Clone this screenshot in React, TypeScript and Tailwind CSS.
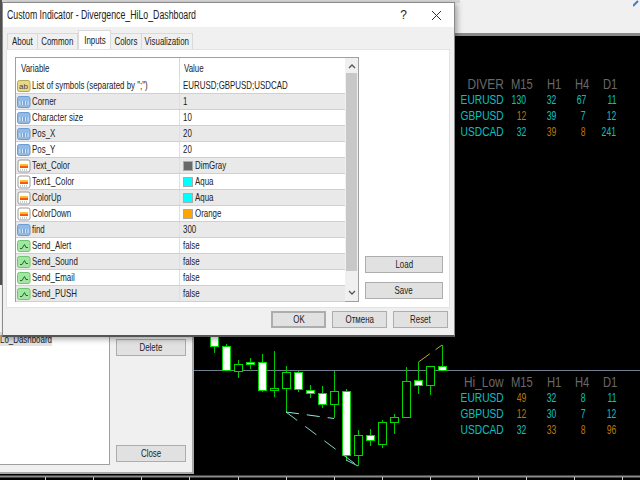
import type { ReactNode } from 'react';

const font = "[font-family:'Liberation_Sans',Arial,sans-serif]";

type Kind = 'ab' | 'num' | 'color' | 'bool';

const rows: { name: string; value: string; kind: Kind; swatch?: string }[] = [
  { name: 'List of symbols (separated by ";")', value: 'EURUSD;GBPUSD;USDCAD', kind: 'ab' },
  { name: 'Corner', value: '1', kind: 'num' },
  { name: 'Character size', value: '10', kind: 'num' },
  { name: 'Pos_X', value: '20', kind: 'num' },
  { name: 'Pos_Y', value: '20', kind: 'num' },
  { name: 'Text_Color', value: 'DimGray', kind: 'color', swatch: '#696969' },
  { name: 'Text1_Color', value: 'Aqua', kind: 'color', swatch: '#00ffff' },
  { name: 'ColorUp', value: 'Aqua', kind: 'color', swatch: '#00ffff' },
  { name: 'ColorDown', value: 'Orange', kind: 'color', swatch: '#ffa500' },
  { name: 'find', value: '300', kind: 'num' },
  { name: 'Send_Alert', value: 'false', kind: 'bool' },
  { name: 'Send_Sound', value: 'false', kind: 'bool' },
  { name: 'Send_Email', value: 'false', kind: 'bool' },
  { name: 'Send_PUSH', value: 'false', kind: 'bool' },
];

// the screenshot is squeezed sideways, so the text is too
function Sq({ children, className = 'origin-left' }: { children: ReactNode; className?: string }) {
  return <span className={`inline-block scale-x-[0.72] whitespace-nowrap ${className}`}>{children}</span>;
}

function RowIcon({ kind }: { kind: Kind }) {
  if (kind === 'ab') {
    return (
      <svg width="14" height="14" viewBox="0 0 14 14" className="shrink-0">
        <rect x="0.5" y="1.5" width="12.5" height="11" rx="2" fill="#e8d98a" stroke="#b5a65a" />
        <text x="2" y="10" fontSize="8" fill="#444" fontFamily="Liberation Sans">ab</text>
      </svg>
    );
  }
  if (kind === 'num') {
    return (
      <svg width="14" height="14" viewBox="0 0 14 14" className="shrink-0">
        <rect x="0.5" y="1.5" width="12.5" height="11" rx="2" fill="#8fbbe8" stroke="#6d9ccf" />
        <rect x="2.5" y="6" width="9" height="4" fill="#dceafa" />
        <path d="M3.5 7h1.5M6 7h2M9 7h1.5M3.5 9h1.5M6 9h2M9 9h1.5" stroke="#2f5f95" strokeWidth="1" />
      </svg>
    );
  }
  if (kind === 'color') {
    return (
      <svg width="14" height="14" viewBox="0 0 14 14" className="shrink-0">
        <rect x="1" y="1" width="12" height="12" rx="2" fill="#fff" stroke="#9a9a9a" />
        <rect x="3" y="5" width="8" height="2" fill="#f6c22c" />
        <rect x="3" y="7" width="8" height="2" fill="#ee5a1a" />
        <path d="M3 11h8" stroke="#999" strokeDasharray="1 1" />
      </svg>
    );
  }
  return (
    <svg width="14" height="14" viewBox="0 0 14 14" className="shrink-0">
      <rect x="0.5" y="1.5" width="12.5" height="11" rx="2" fill="#a3e6a3" stroke="#6cc76c" />
      <path d="M3 9.5h2l2.5-4 1.5 3h2" stroke="#1c6b2a" fill="none" />
    </svg>
  );
}

function Btn({ label, className }: { label: string; className: string }) {
  return (
    <div className={`flex h-[17px] items-center justify-center border border-[#adadad] bg-[#e1e1e1] text-[11px] text-[#222] ${className}`}>
      <Sq className="origin-center">{label}</Sq>
    </div>
  );
}

function Tab({ label, className }: { label: string; className: string }) {
  return (
    <div className={`flex items-center justify-center border border-b-0 border-[#d9d9d9] ${className}`}>
      <Sq className="origin-center">{label}</Sq>
    </div>
  );
}

function ParamTable() {
  return (
    <div className="relative flex h-[245px] w-[344px] flex-col border border-[#a0a0a0] bg-white">
      <div className="flex h-[20px] w-[329px] items-center">
        <div className="w-[164px] border-r border-[#d8d8d8] pl-[5px] leading-[20px]"><Sq>Variable</Sq></div>
        <div className="pl-[4px]"><Sq>Value</Sq></div>
      </div>
      {rows.map((r, i) => (
        <div key={r.name} className={`flex h-[16px] w-[329px] border-b border-[#d0d0d0] ${i % 2 ? 'bg-[#e9e9e9]' : 'bg-white'}`}>
          <div className="flex w-[164px] items-center gap-[1px] border-r border-[#e0e0e0] pl-[1px]">
            <RowIcon kind={r.kind} />
            <Sq>{r.name}</Sq>
          </div>
          <div className="flex items-center gap-[2px] pl-[3px]">
            {r.swatch && <span className="h-[10px] w-[10px] border border-[#aaa]" style={{ backgroundColor: r.swatch }} />}
            <Sq>{r.value}</Sq>
          </div>
        </div>
      ))}
      <div className="absolute top-0 right-0 bottom-0 flex w-[13px] flex-col bg-[#f0f0f0]">
        <div className="flex h-[15px] items-center justify-center">
          <svg width="8" height="6" viewBox="0 0 8 6"><path d="M1 5l3-3 3 3" stroke="#555" strokeWidth="1.3" fill="none" /></svg>
        </div>
        <div className="mx-px h-[198px] bg-[#c8c8c8]" />
        <div className="mt-auto flex h-[17px] items-center justify-center">
          <svg width="8" height="6" viewBox="0 0 8 6"><path d="M1 1l3 3 3-3" stroke="#555" strokeWidth="1.3" fill="none" /></svg>
        </div>
      </div>
    </div>
  );
}

function Dialog() {
  return (
    <div className={`absolute top-[2px] left-[2px] flex h-[335px] w-[453px] flex-col border border-[#8a8a8a] border-b-2 border-b-[#555] bg-[#f0f0f0] text-[11px] text-[#222] shadow-[2px_2px_6px_rgba(0,0,0,0.35)] ${font}`}>
      <div className="flex h-[24px] shrink-0 items-center bg-white pl-[4px] text-[12px]">
        <span className="inline-block origin-left scale-x-[0.73] whitespace-nowrap">Custom Indicator - Divergence_HiLo_Dashboard</span>
        <span className="ml-auto text-[12px]">?</span>
        <svg width="11" height="11" viewBox="0 0 11 11" className="mr-[12px] ml-[24px]"><path d="M1 1l9 9M10 1l-9 9" stroke="#333" strokeWidth="1" /></svg>
      </div>
      <div className="relative z-10 flex h-[22px] items-end pl-[4px]">
        <Tab label="About" className="h-[16px] w-[31px] bg-[#f0f0f0]" />
        <Tab label="Common" className="h-[16px] w-[40px] border-l-0 bg-[#f0f0f0]" />
        <Tab label="Inputs" className="h-[19px] w-[33px] bg-white" />
        <Tab label="Colors" className="h-[16px] w-[31px] border-l-0 bg-[#f0f0f0]" />
        <Tab label="Visualization" className="h-[16px] w-[51px] border-l-0 bg-[#f0f0f0]" />
      </div>
      <div className="mx-[3px] flex h-[259px] w-[444px] gap-[6px] border border-[#e3e3e3] bg-white pt-[7px] pl-[8px]">
        <ParamTable />
        <div className="flex flex-col gap-[9px] pt-[199px]">
          <Btn label="Load" className="w-[78px]" />
          <Btn label="Save" className="w-[78px]" />
        </div>
      </div>
      <div className="flex justify-end gap-[6px] pt-[3px] pr-[6px]">
        <Btn label="OK" className="w-[55px] border-2 border-[#0078d7]" />
        <Btn label="Отмена" className="w-[55px]" />
        <Btn label="Reset" className="w-[55px]" />
      </div>
    </div>
  );
}

function BackWindow() {
  return (
    <div className={`absolute top-[285px] left-0 flex h-[189px] w-[194px] border-r-2 border-b-2 border-[#a8a8a8] bg-[#f0f0f0] text-[11px] text-[#222] ${font}`}>
      <div className="relative h-[180px] w-[111px] border-r border-b border-[#a0a0a0] bg-white">
        <div className="absolute top-[47px] left-0 w-[52px] bg-[#e4e4e4] leading-[14px]"><Sq>Lo_Dashboard</Sq></div>
      </div>
      <div className="flex flex-1 flex-col justify-between pt-[54px] pr-[6px] pb-[10px] pl-[6px]">
        <Btn label="Delete" className="w-[70px]" />
        <Btn label="Close" className="w-[70px]" />
      </div>
    </div>
  );
}

// candle data as read off the picture: x, wick top, wick bottom, body top, body bottom, filled
const candles: [number, number, number, number, number, boolean][] = [
  [214, 330, 353, 330, 346, true],
  [226, 344, 371, 346, 370, true],
  [238, 360, 378, 364, 371, false],
  [250, 358, 369, 362, 364, true],
  [262, 354, 392, 362, 390, true],
  [274, 351, 397, 388, 390, false],
  [286, 366, 412, 372, 388, false],
  [298, 371, 392, 372, 389, true],
  [310, 385, 398, 390, 393, true],
  [322, 386, 408, 393, 404, true],
  [334, 371, 418, 391, 404, false],
  [346, 389, 461, 391, 455, true],
  [358, 430, 466, 435, 455, false],
  [370, 429, 446, 435, 440, true],
  [382, 420, 448, 422, 444, false],
  [394, 414, 434, 417, 422, false],
  [406, 367, 417, 381, 417, false],
  [418, 362, 394, 380, 385, true],
  [430, 366, 395, 366, 385, false],
  [442, 345, 371, 366, 370, true],
];

function CandleChart() {
  return (
    <svg width="640" height="150" viewBox="0 330 640 150" className="absolute top-[330px] left-0">
      <path d="M193 370.5H640" stroke="#708090" />
      {candles.map(([x, wt, wb, bt, bb, filled]) => (
        <g key={x} shapeRendering="crispEdges">
          <path d={`M${x + 0.5} ${wt}V${wb}`} stroke="#00c800" />
          <rect x={x - 3.5} y={bt + 0.5} width="8" height={bb - bt} fill={filled ? '#fff' : '#000'} stroke="#00d800" />
        </g>
      ))}
      <path d="M286 412L334 418.5" stroke="#8fe8d8" strokeDasharray="13 8" />
      <path d="M286 412L358 466" stroke="#7fd8c8" strokeDasharray="14 10" />
      <path d="M418.5 362L442 345" stroke="#b8b030" strokeDasharray="14 7" />
      <path d="M346 460L358 466" stroke="#7fd8c8" />
      <path d="M0 476.5H640" stroke="#8c8c8c" strokeWidth="2" />
      <path d="M45.5 477V480M93.5 477V480M141.5 477V480M189.5 477V480M238.5 477V480M286.5 477V480M334.5 477V480M382.5 477V480M430.5 477V480M478.5 477V480M526.5 477V480M574.5 477V480M622.5 477V480" stroke="#ccc" />
    </svg>
  );
}

const up = 'text-[#00c4c4]';
const down = 'text-[#b87808]';

type Cell = [string, string];

function Dash({ title, rowsData, className }: { title: string; rowsData: { sym: string; cells: Cell[] }[]; className: string }) {
  return (
    <div className={`absolute left-[450px] w-[190px] ${font} ${className}`}>
      <div className="flex h-[16px] items-center text-[14px] text-[#696969]">
        <span className="w-[54px] text-right"><span className="inline-block origin-right scale-x-[0.85] whitespace-nowrap">{title}</span></span>
        <span className="ml-[7px] w-[36px]"><span className="inline-block origin-left scale-x-[0.8]">M15</span></span>
        <span className="w-[28px]"><span className="inline-block origin-left scale-x-[0.8]">H1</span></span>
        <span className="w-[28px]"><span className="inline-block origin-left scale-x-[0.8]">H4</span></span>
        <span><span className="inline-block origin-left scale-x-[0.8]">D1</span></span>
      </div>
      {rowsData.map((r) => (
        <div key={r.sym} className="flex h-[16px] items-center text-[12px]">
          <span className={`w-[54px] text-right ${up}`}><span className="inline-block origin-right scale-x-[0.85]">{r.sym}</span></span>
          {r.cells.map(([v, c], i) => (
            <span key={i} className={`${i === 0 ? 'w-[22px]' : 'w-[30px]'} text-right ${c}`}>
              <span className="inline-block origin-right scale-x-[0.72]">{v}</span>
            </span>
          ))}
        </div>
      ))}
    </div>
  );
}

export default function App() {
  return (
    <div className="relative h-[480px] w-[640px] overflow-hidden bg-black">
      <div className="flex h-[36px] items-start justify-end border-b-[3px] border-[#8a8a8a] bg-[#f0f0f0]">
        <svg width="6" height="7" viewBox="0 0 6 7" className="mr-[1px]"><path d="M0 6l5-5" stroke="#3b7fd0" strokeWidth="2" /></svg>
      </div>
      <div className="absolute top-0 left-0 h-[3px] w-[460px] bg-[#d8d8d8]" />
      <div className="absolute top-0 left-0 h-[285px] w-[2px] bg-[#555]" />
      <CandleChart />
      <Dash
        title="DIVER"
        className="top-[76px]"
        rowsData={[
          { sym: 'EURUSD', cells: [['130', up], ['32', up], ['67', up], ['11', up]] },
          { sym: 'GBPUSD', cells: [['12', down], ['39', up], ['7', up], ['12', up]] },
          { sym: 'USDCAD', cells: [['32', up], ['39', down], ['8', down], ['241', up]] },
        ]}
      />
      <Dash
        title="Hi_Low"
        className="top-[374px]"
        rowsData={[
          { sym: 'EURUSD', cells: [['49', down], ['32', up], ['8', up], ['11', up]] },
          { sym: 'GBPUSD', cells: [['12', down], ['30', up], ['7', up], ['12', up]] },
          { sym: 'USDCAD', cells: [['32', up], ['33', down], ['8', down], ['96', down]] },
        ]}
      />
      <BackWindow />
      <Dialog />
    </div>
  );
}
